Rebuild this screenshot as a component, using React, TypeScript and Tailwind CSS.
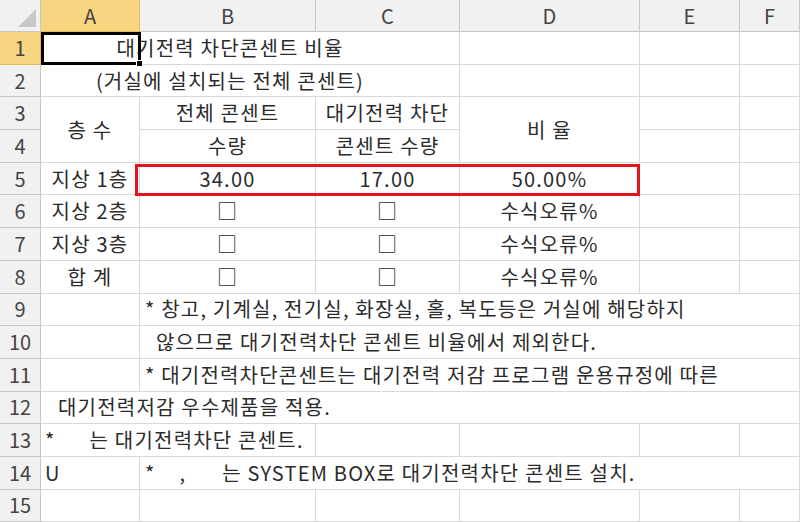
import React from "react";

const C = "border-r border-b border-[#d9d9d9] flex items-center whitespace-nowrap overflow-visible";
const H = "border-r border-b border-[#c6c6c6] bg-[#f1f1f1] flex items-center justify-center text-[#444] tracking-normal";

function Cell({ cls = "", children }: { cls?: string; children?: React.ReactNode }) {
  return <div className={`${C} ${cls}`}>{children}</div>;
}

export default function App() {
  const rowNums = Array.from({ length: 15 }, (_, i) => i + 1);
  return (
    <div
      className="relative w-[800px] h-[522px] overflow-hidden bg-white text-[20px] tracking-[1.2px] text-[#2b2b2b]"
      style={{ fontFamily: '"Noto Sans CJK KR", "Noto Sans", sans-serif' }}
    >
      <div className="grid grid-cols-[41px_99px_176px_144px_180px_100px_60px] grid-rows-[32px_repeat(15,32.7px)]">
        <div className={`${H} relative`}>
          <svg width="18" height="18" className="absolute right-1 bottom-1"><polygon points="18,0 18,18 0,18" fill="#c8c8c8" /></svg>
        </div>
        <div className={`${H} bg-[#f8d681] border-[#e2b95a]`}>A</div>
        <div className={H}>B</div>
        <div className={H}>C</div>
        <div className={H}>D</div>
        <div className={H}>E</div>
        <div className={H}>F</div>

        {rowNums.map((n) => (
          <div
            key={n}
            className={`${H} col-start-1 ${n === 1 ? "bg-[#f8d681] border-[#e2b95a]" : ""}`}
            style={{ gridRow: n + 1 }}
          >
            {n}
          </div>
        ))}

        <Cell cls="col-start-2 col-span-3 row-start-2 justify-center pr-[40px]">대기전력 차단콘센트 비율</Cell>
        <Cell cls="col-start-5 row-start-2" />
        <Cell cls="col-start-6 row-start-2" />
        <Cell cls="col-start-7 row-start-2" />
        <Cell cls="col-start-2 col-span-3 row-start-3 justify-center pr-[40px]">(거실에 설치되는 전체 콘센트)</Cell>
        <Cell cls="col-start-5 row-start-3" />
        <Cell cls="col-start-6 row-start-3" />
        <Cell cls="col-start-7 row-start-3" />
        <Cell cls="col-start-2 row-start-4 row-span-2 justify-center">층 수</Cell>
        <Cell cls="col-start-3 row-start-4 justify-center">전체 콘센트</Cell>
        <Cell cls="col-start-4 row-start-4 justify-center">대기전력 차단</Cell>
        <Cell cls="col-start-5 row-start-4 row-span-2 justify-center">비 율</Cell>
        <Cell cls="col-start-6 row-start-4" />
        <Cell cls="col-start-7 row-start-4" />
        <Cell cls="col-start-3 row-start-5 justify-center">수량</Cell>
        <Cell cls="col-start-4 row-start-5 justify-center">콘센트 수량</Cell>
        <Cell cls="col-start-6 row-start-5" />
        <Cell cls="col-start-7 row-start-5" />
        {[
          ["지상 1층", "34.00", "17.00", "50.00%"],
          ["지상 2층", "□", "□", "수식오류%"],
          ["지상 3층", "□", "□", "수식오류%"],
          ["합 계", "□", "□", "수식오류%"],
        ].map((r, i) => (
          <React.Fragment key={i}>
            <Cell cls="col-start-2 justify-center">{r[0]}</Cell>
            <Cell cls="justify-center">{r[1]}</Cell>
            <Cell cls="justify-center">{r[2]}</Cell>
            <Cell cls="justify-center">{r[3]}</Cell>
            <Cell />
            <Cell />
          </React.Fragment>
        ))}
        <Cell cls="col-start-2" />
        <Cell cls="col-span-5 pl-[5px]">* 창고, 기계실, 전기실, 화장실, 홀, 복도등은 거실에 해당하지</Cell>
        <Cell cls="col-start-2" />
        <Cell cls="col-span-5 pl-[16px]">않으므로 대기전력차단 콘센트 비율에서 제외한다.</Cell>
        <Cell cls="col-start-2" />
        <Cell cls="col-span-5 pl-[5px]">* 대기전력차단콘센트는 대기전력 저감 프로그램 운용규정에 따른</Cell>
        <Cell cls="col-start-2 col-span-6 pl-[17px]">대기전력저감 우수제품을 적용.</Cell>
        <Cell cls="col-start-2 col-span-2 pl-[4px]">*<span className="ml-[34px]">는 대기전력차단 콘센트.</span></Cell>
        <Cell />
        <Cell />
        <Cell />
        <Cell />
        <Cell cls="col-start-2 pl-[4px]">U</Cell>
        <Cell cls="col-span-5 pl-[5px]">*<span className="ml-[24px]">,</span><span className="ml-[36px]">는 SYSTEM BOX로 대기전력차단 콘센트 설치.</span></Cell>
        <Cell cls="col-start-2" />
        <Cell />
        <Cell />
        <Cell />
        <Cell />
        <Cell />
      </div>

      <div className="absolute left-[41px] top-[32px] w-[100px] h-[33px] border-[3px] border-black pointer-events-none" />
      <div className="absolute left-[136px] top-[60px] w-[7px] h-[7px] bg-black border border-white" />
      <div className="absolute left-[135px] top-[164px] w-[505px] h-[32px] border-[3px] border-[#e3141c] pointer-events-none" />
    </div>
  );
}
